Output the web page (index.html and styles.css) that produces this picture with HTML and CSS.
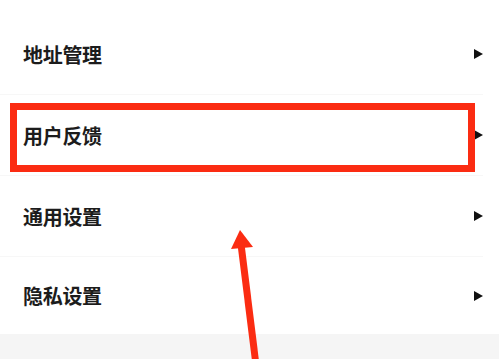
FILE: index.html
```html
<!DOCTYPE html>
<html lang="zh-CN">
<head>
<meta charset="utf-8">
<title>设置</title>
<link rel="stylesheet" href="styles.css">
</head>
<body>
<div class="page">
  <ul class="menu">
    <li class="item"><span class="label">地址管理</span><svg class="chev" viewBox="0 0 9 10"><polygon points="0,0 9,5 0,10"/></svg></li>
    <li class="item"><span class="label">用户反馈</span><svg class="chev" viewBox="0 0 9 10"><polygon points="0,0 9,5 0,10"/></svg></li>
    <li class="item"><span class="label">通用设置</span><svg class="chev" viewBox="0 0 9 10"><polygon points="0,0 9,5 0,10"/></svg></li>
    <li class="item last"><span class="label">隐私设置</span><svg class="chev" viewBox="0 0 9 10"><polygon points="0,0 9,5 0,10"/></svg></li>
  </ul>
  <div class="footer-band"></div>
  <div class="highlight-box"></div>
  <svg class="pointer" viewBox="0 0 499 359" width="499" height="359">
    <line x1="256" y1="365" x2="241" y2="244" stroke="#fb2c12" stroke-width="7"/>
    <polygon points="240,230 253,247 231,249" fill="#fb2c12"/>
  </svg>
</div>
</body>
</html>
```
FILE: styles.css
```css
html, body {
  margin: 0;
  padding: 0;
  background: #ffffff;
}
.page {
  position: relative;
  width: 499px;
  height: 359px;
  overflow: hidden;
  font-family: "Noto Sans CJK SC", "Noto Sans", sans-serif;
}
.menu {
  list-style: none;
  margin: 0;
  padding: 14px 16px 0 0;
  display: flex;
  flex-direction: column;
}
.item {
  box-sizing: border-box;
  height: 81px;
  display: flex;
  align-items: center;
  justify-content: space-between;
  padding-left: 23px;
  border-bottom: 1px solid #f7f7f7;
}
.item.last {
  height: 77px;
  border-bottom: none;
}
.label {
  font-size: 20px;
  font-weight: 700;
  color: #1c1c1c;
  letter-spacing: -0.3px;
}
.chev {
  width: 9px;
  height: 10px;
  fill: #111111;
}
.footer-band {
  height: 30px;
  background: #f5f5f5;
}
.highlight-box {
  position: absolute;
  left: 10px;
  top: 103px;
  width: 465px;
  height: 69px;
  box-sizing: border-box;
  border: 7px solid #fb2c12;
}
.pointer {
  position: absolute;
  left: 0;
  top: 0;
}
```
